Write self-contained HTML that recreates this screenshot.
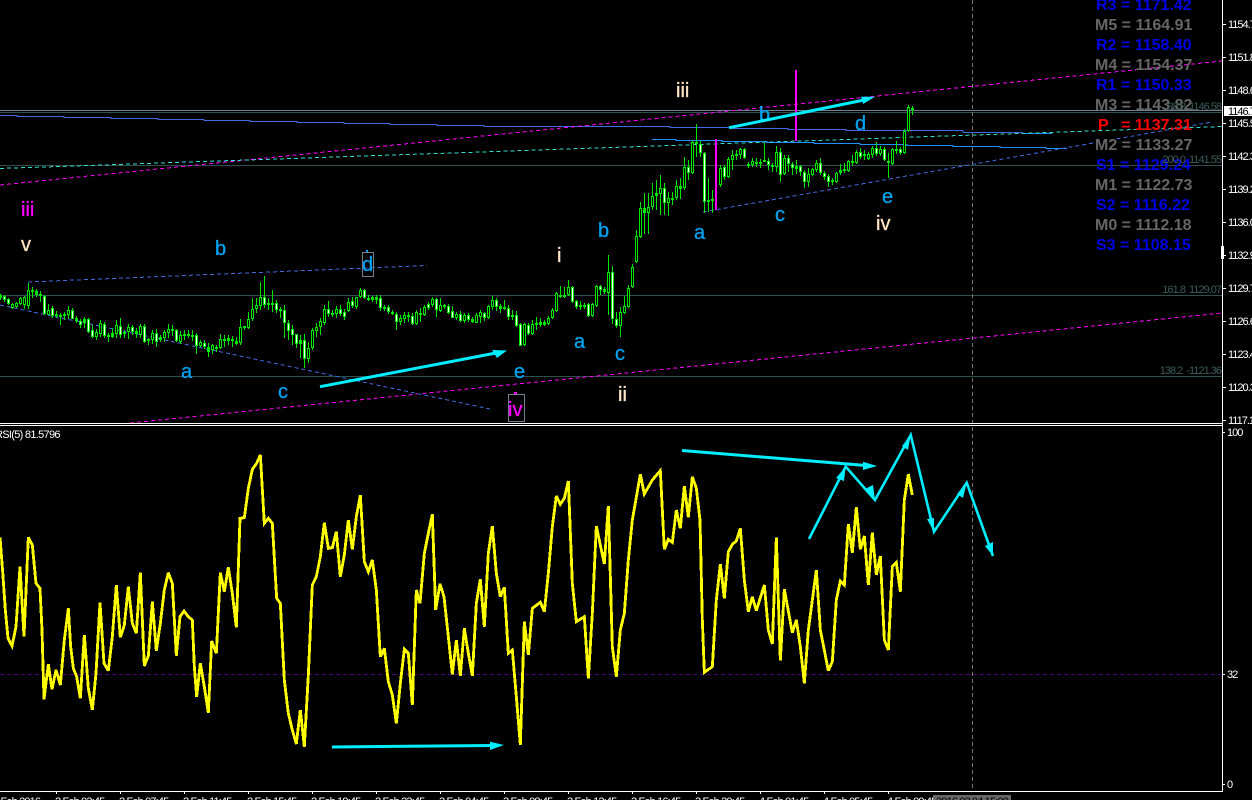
<!DOCTYPE html>
<html><head><meta charset="utf-8"><title>Chart</title>
<style>
html,body{margin:0;padding:0;background:#000;width:1252px;height:800px;overflow:hidden}
svg{display:block}
text{font-family:"Liberation Sans",sans-serif}
.w{font-size:20px;fill:#00a2f0;stroke:#00a2f0;stroke-width:.3px}
.bq{font-size:20px;fill:#ffe4c4;stroke:#ffe4c4;stroke-width:.3px}
.mg{font-size:20px;fill:#f0f;stroke:#f0f;stroke-width:.3px}
.p{font-size:16px;font-weight:bold;fill:#0000e6}
.m{font-size:16px;font-weight:bold;fill:#666}
.ax{font-size:11px;fill:#fff;letter-spacing:-1px}
.t{font-size:11px;fill:#fff;letter-spacing:-.85px}
.f{font-size:11px;fill:#3d5c5c;letter-spacing:-1px;text-anchor:end}
</style></head><body>
<svg width="1252" height="800" viewBox="0 0 1252 800" xmlns="http://www.w3.org/2000/svg">
<rect width="1252" height="800" fill="#000"/>

<!-- horizontal fib lines -->
<g shape-rendering="crispEdges" stroke-width="1" fill="none">
<path d="M0 110.5H1222" stroke="#708090"/>
<path d="M0 112.5H1222M0 165.500H1222M0 295.500H1222M0 376.500H1222" stroke="#2f4f4f"/>
</g>

<!-- solid blue stepped lines -->
<g fill="none" shape-rendering="crispEdges" stroke-width="1">
<path stroke="#4169e1" d="M0 115.500H17V116.500H64V117.500H111V118.500H158V119.500H204V120.500H250V121.500H297V122.500H344V123.500H390V124.500H437V125.500H484V126.500H670V127.500H730V128.500H788V129.500H846V130.500H963V132.500H1023"/>
<path stroke="#1e90ff" d="M1023 133.500H1052"/>
<path stroke="#1e90ff" d="M652 139.500H676V140.500H722V141.500H767V142.500H814V143.500H860V144.500H907V145.500H953V146.500H1000V147.500H1046V148.500H1067"/>
</g>

<!-- dashed trend lines -->
<g fill="none" stroke-dasharray="4 3" stroke-width="1" shape-rendering="crispEdges">
<path d="M0 185L1222 61" stroke="#f0f"/>
<path d="M130 423L1222 313" stroke="#f0f"/>
<path d="M0 168.500L1222 126.500" stroke="#2fe0d0"/>
<path d="M703 212L1212 122" stroke="#4169e1"/>
<path d="M0 305L490 409" stroke="#4169e1"/>
<path d="M28 282L427 265.500" stroke="#4169e1"/>
</g>

<!-- candle wicks -->
<g fill="none" shape-rendering="crispEdges">
<path stroke="#00e600" stroke-width="1" d="M.5 294V300M4.5 295V302M8.5 298V305M12.5 303V309M16.5 302V308M20.5 297V305M24.5 296V309M28.5 283V309M32.5 287V298M36.5 289V297M40.5 291V302M44.5 295V315M48.5 304V315M52.5 306V318M56.5 311V318M60.5 313V325M64.5 312V320M68.5 306V319M72.5 308V319M76.5 316V323M80.5 319V328M84.5 317V328M88.5 318V333M92.5 325V338M96.5 329V340M100.5 320V337M104.5 322V338M108.5 333V342M112.5 328V338M116.5 320V338M120.5 318V338M124.5 330V338M128.5 324V339M132.5 325V335M136.5 328V338M140.5 324V338M144.5 324V343M148.5 338V345M152.5 330V344M156.5 329V347M160.5 335V342M164.5 330V342M168.5 324V338M172.5 325V336M176.5 329V342M180.5 331V344M184.5 330V340M188.5 330V338M192.5 330V341M196.5 333V354M200.5 340V347M204.5 340V349M208.5 343V357M212.5 344V354M216.5 345V352M220.5 334V349M224.5 335V347M228.5 335V345M232.5 336V347M236.5 337V345M240.5 319V345M244.5 326V330M248.5 312V329M252.5 298V321M256.5 298V313M260.5 282V310M264.5 276V308M268.5 298V310M272.5 290V312M276.5 300V313M280.5 307V318M284.5 305V338M288.5 320V340M292.5 325V345M296.5 334V348M300.5 335V358M304.5 334V368M308.5 342V363M312.5 328V350M316.5 323V337M320.5 318V335M324.5 305V325M328.5 301V317M332.5 310V317M336.5 306V318M340.5 305V316M344.5 309V320M348.5 298V312M352.5 297V308M356.5 297V309M360.5 288V298M364.5 289V299M368.5 295V301M372.5 296V302M376.5 295V304M380.5 295V311M384.5 305V311M388.5 305V314M392.5 310V315M396.5 312V330M400.5 315V325M404.5 312V323M408.5 312V322M412.5 313V325M416.5 310V325M420.5 308V322M424.5 305V316M428.5 302V310M432.5 297V307M436.5 298V317M440.5 298V312M444.5 304V309M448.5 304V314M452.5 306V318M456.5 312V320M460.5 311V322M464.5 313V323M468.5 313V322M472.5 317V323M476.5 313V323M480.5 310V323M484.5 312V321M488.5 305V319M492.5 296V310M496.5 298V311M500.5 304V313M504.5 300V310M508.5 305V320M512.5 310V320M516.5 311V327M520.5 323V346M524.5 323V346M528.5 323V335M532.5 320V335M536.5 317V330M540.5 318V327M544.5 320V326M548.5 316V325M552.5 308V319M556.5 292V312M560.5 286V298M564.5 287V298M568.5 280V296M572.5 286V303M576.5 300V309M580.5 301V310M584.5 303V309M588.5 303V317M592.5 303V317M596.5 285V307M600.5 285V295M604.5 287V294M608.5 255V315M612.5 266V324M616.5 312V328M620.5 307V337M624.5 296V314M628.5 285V308M632.5 264V288M636.5 230V263M640.5 202V238M644.5 193V234M648.5 193V234M652.5 183V210M656.5 180V210M660.5 175V215M664.5 183V215M668.5 192V216M672.5 192V205M676.5 180V200M680.5 178V199M684.5 157V190M688.5 160V180M692.5 140V174M696.5 124V157M700.5 141V157M704.5 152V213M708.5 178V212M712.5 190V213M720.5 165V187M724.5 165V180M728.5 157V178M732.5 150V170M736.5 150V160M740.5 148V159M744.5 148V159M748.5 162V168M752.5 158V167M756.5 158V167M760.5 159V168M764.5 143V162M768.5 158V170M772.5 163V172M776.5 146V172M780.5 148V182M784.5 155V175M788.5 155V172M792.5 162V175M796.5 160V174M800.5 165V176M804.5 170V188M808.5 168V187M812.5 168V176M816.5 160V172M820.5 158V175M824.5 171V180M828.5 174V187M832.5 178V185M836.5 172V183M840.5 164V175M844.5 163V173M848.5 160V172M852.5 155V166M856.5 150V164M860.5 148V159M864.5 150V160M868.5 152V160M872.5 146V158M876.5 142V156M880.5 146V156M884.5 147V161M888.5 153V178M892.5 148V165M896.5 141V154M900.5 147V155M904.5 129V154M908.5 105V132M912.5 106V115"/>
<!-- candle bodies -->
<path stroke="#00e600" stroke-width="3" d="M.5 295V298M4.5 296V300M8.5 299V304M12.5 304V308M16.5 303V307M20.5 298V304M24.5 297V305M28.5 290V306M32.5 290V292M36.5 291V295M40.5 294V296M44.5 296V314M48.5 310V315M52.5 308V316M56.5 314V316M60.5 315V317M64.5 314V316M68.5 310V315M72.5 310V319M76.5 318V321M80.5 321V325M84.5 319V323M88.5 319V332M92.5 330V337M96.5 332V337M100.5 323V334M104.5 324V336M108.5 335V337M112.5 333V337M116.5 325V334M120.5 326V335M124.5 332V334M128.5 327V332M132.5 327V332M136.5 331V334M140.5 326V335M144.5 326V342M148.5 339V341M152.5 333V340M156.5 333V342M160.5 337V340M164.5 332V338M168.5 329V333M172.5 329V331M176.5 330V341M180.5 335V342M184.5 334V336M188.5 334V336M192.5 335V337M196.5 335V346M200.5 342V346M204.5 343V347M208.5 347V352M212.5 345V350M216.5 347V349M220.5 339V348M224.5 339V341M228.5 338V341M232.5 339V341M236.5 341V344M240.5 327V343M244.5 326V328M248.5 319V328M252.5 309V319M256.5 305V309M260.5 297V306M264.5 297V305M268.5 303V305M272.5 303V305M276.5 303V310M280.5 309V311M284.5 310V323M288.5 323V331M292.5 329V335M296.5 334V344M300.5 340V344M304.5 340V359M308.5 348V359M312.5 330V348M316.5 327V331M320.5 321V327M324.5 309V323M328.5 309V314M332.5 313V315M336.5 309V314M340.5 309V314M344.5 312V317M348.5 302V311M352.5 301V306M356.5 297V307M360.5 290V297M364.5 290V298M368.5 298V300M372.5 297V300M376.5 297V300M380.5 298V308M384.5 307V309M388.5 307V312M392.5 312V314M396.5 314V322M400.5 318V322M404.5 315V319M408.5 315V317M412.5 316V324M416.5 312V324M420.5 313V315M424.5 307V315M428.5 304V308M432.5 299V305M436.5 299V310M440.5 305V311M444.5 305V307M448.5 306V313M452.5 311V318M456.5 314V318M460.5 314V321M464.5 315V321M468.5 315V320M472.5 319V322M476.5 315V323M480.5 312V317M484.5 313V318M488.5 306V318M492.5 300V307M496.5 300V307M500.5 306V309M504.5 307V309M508.5 308V317M512.5 315V317M516.5 315V326M520.5 324V346M524.5 324V345M528.5 325V334M532.5 324V334M536.5 323V325M540.5 322V325M544.5 322V325M548.5 318V324M552.5 310V318M556.5 293V311M560.5 295V297M564.5 295V297M568.5 287V295M572.5 287V302M576.5 301V307M580.5 305V307M584.5 305V307M588.5 304V316M592.5 304V316M596.5 286V306M600.5 286V290M604.5 289V292M608.5 272V293M612.5 272V319M616.5 319V326M620.5 312V326M624.5 306V313M628.5 288V307M632.5 267V287M636.5 236V262M640.5 208V237M644.5 208V213M648.5 207V213M652.5 196V207M656.5 193V196M660.5 188V194M664.5 188V203M668.5 198V203M672.5 198V200M676.5 186V198M680.5 186V189M684.5 167V188M688.5 167V173M692.5 142V173M696.5 142V144M700.5 144V153M704.5 153V202M708.5 200V202M712.5 199V201M720.5 168V185M724.5 167V177M728.5 159V177M732.5 155V160M736.5 154V156M740.5 149V155M744.5 149V158M748.5 164V166M752.5 161V165M756.5 162V164M760.5 162V164M764.5 160V162M768.5 161V165M772.5 165V167M776.5 152V167M780.5 152V175M784.5 158V174M788.5 158V164M792.5 164V168M796.5 166V169M800.5 166V172M804.5 172V182M808.5 174V182M812.5 169V175M816.5 163V170M820.5 163V173M824.5 173V177M828.5 176V182M832.5 180V182M836.5 173V182M840.5 170V173M844.5 169V171M848.5 161V171M852.5 161V163M856.5 152V163M860.5 152V157M864.5 154V156M868.5 154V159M872.5 148V155M876.5 148V154M880.5 149V154M884.5 149V160M888.5 161V163M892.5 149V164M896.5 149V151M900.5 149V153M904.5 131V153M908.5 107V131M912.5 108V110"/>
<!-- bear candles, white fill -->
<path stroke="#fff" stroke-width="1" d="M4.5 297V299M8.5 300V303M44.5 297V313M52.5 309V315M72.5 311V318M80.5 322V324M88.5 320V331M92.5 331V336M104.5 325V335M120.5 327V334M132.5 328V331M144.5 327V341M156.5 334V341M176.5 331V340M196.5 336V345M204.5 344V346M264.5 298V304M276.5 304V309M284.5 311V322M288.5 324V330M292.5 330V334M296.5 335V343M304.5 341V358M328.5 310V313M340.5 310V313M344.5 313V316M352.5 302V305M364.5 291V297M380.5 299V307M388.5 308V311M396.5 315V321M412.5 317V323M428.5 305V307M436.5 300V309M448.5 307V312M452.5 312V317M460.5 315V320M468.5 316V319M484.5 314V317M496.5 301V306M508.5 309V316M516.5 316V325M520.5 325V345M528.5 326V333M572.5 288V301M576.5 302V306M588.5 305V315M600.5 287V289M612.5 273V318M616.5 320V325M664.5 189V202M688.5 168V172M704.5 154V201M700.5 145V152M724.5 168V176M744.5 150V157M768.5 162V164M780.5 153V174M788.5 159V163M792.5 165V167M800.5 167V171M804.5 173V181M820.5 164V172M824.5 174V176M828.5 177V181M860.5 153V156M876.5 149V153M884.5 150V159M900.5 150V152"/>
<!-- bull candles, black fill -->
<path stroke="#000" stroke-width="1" d="M12.5 305V307M16.5 304V306M20.5 299V303M24.5 298V304M28.5 291V305M48.5 311V314M68.5 311V314M96.5 333V336M100.5 324V333M116.5 326V333M128.5 328V331M140.5 327V334M152.5 334V339M164.5 333V337M168.5 330V332M180.5 336V341M200.5 343V345M212.5 346V349M220.5 340V347M240.5 328V342M248.5 320V327M252.5 310V318M256.5 306V308M260.5 298V305M308.5 349V358M312.5 331V347M316.5 328V330M320.5 322V326M324.5 310V322M336.5 310V313M348.5 303V310M356.5 298V306M360.5 291V296M400.5 319V321M404.5 316V318M416.5 313V323M424.5 308V314M432.5 300V304M440.5 306V310M456.5 315V317M464.5 316V320M476.5 316V322M480.5 313V316M488.5 307V317M492.5 301V306M524.5 325V344M532.5 325V333M548.5 319V323M552.5 311V317M556.5 294V310M568.5 288V294M592.5 305V315M596.5 287V305M608.5 273V292M620.5 313V325M624.5 307V312M628.5 289V306M632.5 268V286M636.5 237V261M640.5 209V236M648.5 208V212M652.5 197V206M660.5 189V193M668.5 199V202M676.5 187V197M684.5 168V187M692.5 143V172M720.5 169V184M728.5 160V176M732.5 156V159M740.5 150V154M752.5 162V164M776.5 153V166M784.5 159V173M808.5 175V181M812.5 170V174M816.5 164V169M836.5 174V181M848.5 162V170M856.5 153V162M868.5 155V158M872.5 149V154M880.5 150V153M892.5 150V163M904.5 132V152M908.5 108V130"/>
</g>

<!-- vertical magenta lines -->
<g shape-rendering="crispEdges" fill="#f0f">
<rect x="715" y="139" width="2" height="71"/>
<rect x="795" y="70" width="2" height="71"/>
</g>

<!-- crosshair -->
<path d="M972.500 0V790" stroke="#777" stroke-dasharray="4 3" shape-rendering="crispEdges"/>
<path d="M0 674.500H1222" stroke="#4b0082" stroke-dasharray="4 3" shape-rendering="crispEdges"/>

<!-- wave labels -->
<text class="mg" x="21" y="216">iii</text>
<text class="bq" x="21" y="251">v</text>
<text class="w" x="215" y="255">b</text>
<text class="w" x="362" y="271">d</text>
<text class="w" x="181" y="378">a</text>
<text class="w" x="278" y="398">c</text>
<text class="w" x="598" y="237">b</text>
<text class="w" x="574" y="348">a</text>
<text class="w" x="514" y="378">e</text>
<text class="w" x="615" y="360">c</text>
<text class="w" x="694" y="239">a</text>
<text class="bq" x="557" y="262">i</text>
<text class="bq" x="618" y="401">ii</text>
<text class="mg" x="508" y="416">iv</text>
<text class="bq" x="676" y="97">iii</text>
<text class="w" x="759" y="121">b</text>
<text class="w" x="855" y="130">d</text>
<text class="w" x="775" y="221">c</text>
<text class="w" x="882" y="203">e</text>
<text class="bq" x="876" y="230">iv</text>
<g fill="none" stroke="#708090" shape-rendering="crispEdges">
<rect x="362.500" y="252.500" width="11" height="24"/>
<rect x="508.500" y="394.500" width="16" height="27"/>
</g>
<rect x="366" y="250" width="2" height="2" fill="#00a2f0"/>
<rect x="514" y="392" width="3" height="2" fill="#f0f"/>

<!-- arrows price -->
<g fill="none" stroke="#0ef" stroke-width="3">
<path d="M320 386.700L496 353"/>
<path d="M729 127.700L864 100"/>
</g>
<g fill="#0ef">
<path d="M507 350.500L492 350L497 358Z"/>
<path d="M875 96.700L861 96.700L863 104Z"/>
</g>

<!-- RSI -->
<g fill="none" stroke="#ff0" stroke-width="8.500" stroke-linejoin="miter" stroke-miterlimit="3" shape-rendering="crispEdges">
<polyline transform="translate(0,420) scale(.33333)" points="0,352 8,455 16,570 24,655 36,678 48,620 60,440 72,650 85,352 97,375 108,490 120,505 126,630 132,838 145,733 156,808 168,750 181,795 193,660 205,565 212,680 220,745 230,770 241,835 253,645 265,805 277,870 288,760 300,548 312,730 325,752 337,650 349,495 361,652 373,615 385,500 397,610 409,640 421,458 433,738 445,708 457,545 469,692 481,610 493,510 505,458 517,490 529,707 540,590 552,573 565,590 577,600 583,740 590,830 601,730 613,800 625,878 635,663 649,700 661,458 673,515 685,442 697,520 709,622 720,295 733,293 745,205 757,148 770,130 781,105 793,310 805,295 817,310 830,535 841,550 853,780 865,880 877,930 889,972 901,870 913,980 925,765 937,495 949,470 961,410 973,308 985,385 997,383 1009,335 1021,470 1033,405 1045,300 1057,388 1069,290 1081,225 1093,425 1105,455 1117,420 1129,510 1141,710 1153,685 1165,785 1177,825 1189,910 1201,790 1213,688 1225,700 1237,855 1249,510 1260,550"/>
<polyline transform="translate(420,420) scale(.33333)" points="0,550 13,400 25,340 37,283 47,570 60,492 72,530 85,650 97,763 109,660 121,768 133,625 145,700 157,768 169,550 181,478 193,620 205,400 217,318 229,460 241,530 253,502 265,700 277,690 289,830 301,975 313,605 325,705 337,565 361,547 373,575 385,460 397,320 409,228 421,253 433,235 445,183 457,490 469,605 493,590 505,775 517,580 529,318 553,432 565,258 577,680 589,770 601,630 613,580 625,420 637,300 661,163 673,222 697,180 721,152 733,388 745,358 757,367 769,270 781,325 793,198 805,292 817,170 829,205 840,300"/>
<polyline transform="translate(700,420) scale(.33333)" points="0,300 7,600 13,757 37,740 49,540 61,432 73,535 85,395 97,373 109,363 121,325 133,480 145,575 157,530 169,572 193,495 205,630 217,672 229,352 241,722 253,508 277,638 289,600 301,680 313,790 325,630 349,450 361,630 385,752 397,725 409,540 421,483 433,495 445,312 457,398 469,262 481,388 493,348 505,495 517,338 529,465 541,408 553,660 565,690 577,440 589,428 601,515 613,240 625,162 637,225"/>
</g>

<!-- arrows RSI -->
<g fill="none" stroke="#0ef">
<path d="M332 747L492 745.500" stroke-width="3"/>
<path d="M682 450.500L866 465.500" stroke-width="3"/>
<path d="M809 539L845.700 466.700L875 500L910.700 435L934 531.700L966.700 482.700L993 556" stroke-width="2.600" stroke-linejoin="miter"/>
</g>
<g fill="#0ef">
<path d="M504 745L490 741.700L490 750Z"/>
<path d="M877 466L863 461.700L863 470Z"/>
<path d="M845.700 466.700L836 478L844 481Z"/>
<path d="M875 500L865 489L873 485Z"/>
<path d="M910.700 435L902 446L908 450Z"/>
<path d="M934 531.700L927 519L934 518Z"/>
<path d="M966.700 482.700L957 494L963 498Z"/>
<path d="M993 556L985 546L993 542Z"/>
</g>

<!-- pivot text -->
<text class="p" x="1096" y="10">R3 = 1171.42</text>
<text class="m" x="1095" y="30">M5 = 1164.91</text>
<text class="p" x="1096" y="50">R2 = 1158.40</text>
<text class="m" x="1095" y="70">M4 = 1154.37</text>
<text class="p" x="1096" y="90">R1 = 1150.33</text>
<text class="m" x="1095" y="110">M3 = 1143.82</text>
<text class="p" x="1098" y="130" style="fill:#f00">P</text>
<text class="p" x="1121" y="130" style="fill:#f00">= 1137.31</text>
<text class="m" x="1095" y="150">M2 = 1133.27</text>
<text class="p" x="1096" y="170">S1 = 1129.24</text>
<text class="m" x="1095" y="190">M1 = 1122.73</text>
<text class="p" x="1096" y="210">S2 = 1116.22</text>
<text class="m" x="1095" y="230">M0 = 1112.18</text>
<text class="p" x="1096" y="250">S3 = 1108.15</text>

<!-- fib labels -->
<text class="f" x="1221" y="110" xml:space="preserve">38.2  1146.58</text>
<text class="f" x="1221" y="163" xml:space="preserve">200.0  1141.55</text>
<text class="f" x="1221" y="293" xml:space="preserve">161.8  1129.07</text>
<text class="f" x="1221" y="374" xml:space="preserve">138.2  -1121.36</text>

<!-- frame -->
<g shape-rendering="crispEdges" fill="none" stroke="#fff">
<path d="M1222.500 0V791"/>
<path d="M0 423.500H1223M0 425.500H1223M0 791.500H1223"/>
<path d="M1222 24.500h4M1222 57.500h4M1222 90.500h4M1222 123.500h4M1222 156.500h4M1222 189.500h4M1222 222.500h4M1222 255.500h4M1222 288.500h4M1222 321.500h4M1222 354.500h4M1222 387.500h4M1222 420.500h4"/>
<path d="M1222 432.500h3M1222 674.500h3M1222 784.500h3"/>
<path d="M56.500 791v3M120.500 791v3M184.500 791v3M248.500 791v3M312.500 791v3M376.500 791v3M440.500 791v3M504.500 791v3M568.500 791v3M632.500 791v3M696.500 791v3M760.500 791v3M824.500 791v3M888.500 791v3"/>
</g>
<rect x="1221" y="246" width="3" height="13" fill="#fff" shape-rendering="crispEdges"/>

<!-- price scale -->
<text class="ax" x="1228" y="28">1154.7</text>
<text class="ax" x="1228" y="61">1151.8</text>
<text class="ax" x="1228" y="94">1148.6</text>
<text class="ax" x="1228" y="127">1145.5</text>
<text class="ax" x="1228" y="160">1142.3</text>
<text class="ax" x="1228" y="193">1139.2</text>
<text class="ax" x="1228" y="226">1136.0</text>
<text class="ax" x="1228" y="259">1132.9</text>
<text class="ax" x="1228" y="292">1129.7</text>
<text class="ax" x="1228" y="325">1126.6</text>
<text class="ax" x="1228" y="358">1123.4</text>
<text class="ax" x="1228" y="391">1120.3</text>
<text class="ax" x="1228" y="424">1117.1</text>
<rect x="1224" y="106" width="28" height="10" fill="#fff" shape-rendering="crispEdges"/>
<text class="ax" x="1228" y="115" style="fill:#000">1146.7</text>
<text class="ax" x="1227" y="436">100</text>
<text class="ax" x="1227" y="678">32</text>
<text class="ax" x="1227" y="788">0</text>
<text x="-5" y="438" style="font-size:11px;fill:#fff;letter-spacing:-.7px">RSI(5) 81.5796</text>

<!-- time scale -->
<text class="t" x="-7" y="805">2 Feb 2016</text>
<text class="t" x="55" y="805">2 Feb 03:45</text>
<text class="t" x="119" y="805">2 Feb 07:45</text>
<text class="t" x="183" y="805">2 Feb 11:45</text>
<text class="t" x="247" y="805">2 Feb 15:45</text>
<text class="t" x="311" y="805">2 Feb 19:45</text>
<text class="t" x="375" y="805">2 Feb 23:45</text>
<text class="t" x="439" y="805">3 Feb 04:45</text>
<text class="t" x="503" y="805">3 Feb 08:45</text>
<text class="t" x="567" y="805">3 Feb 12:45</text>
<text class="t" x="631" y="805">3 Feb 16:45</text>
<text class="t" x="695" y="805">3 Feb 20:45</text>
<text class="t" x="759" y="805">4 Feb 01:45</text>
<text class="t" x="823" y="805">4 Feb 05:45</text>
<text class="t" x="887" y="805">4 Feb 09:45</text>
<rect x="933" y="795" width="78" height="5" fill="#666" shape-rendering="crispEdges"/>
<text class="t" x="936" y="805" style="fill:#000">2016.02.04 15:00</text>
</svg>
</body></html>
